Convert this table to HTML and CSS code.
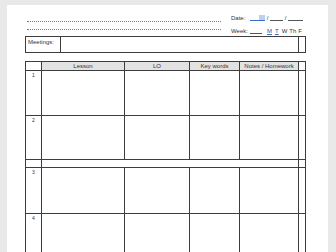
FILE: index.html
```html
<!DOCTYPE html>
<html>
<head>
<meta charset="utf-8">
<link rel="stylesheet" href="styles.css">
</head>
<body>
<div class="page">
  <div class="head">
    <div class="lines">
      <div class="dots"></div>
      <div class="dots second"></div>
    </div>
    <div class="meta">
      <div class="mrow">
        <span class="lbl">Date:</span>
        <span class="blank b15 hl"></span>
        <span class="sl">/</span>
        <span class="blank b13"></span>
        <span class="sl">/</span>
        <span class="blank b15"></span>
      </div>
      <div class="mrow">
        <span class="lbl">Week:</span>
        <span class="blank b12"></span>
        <span class="day link">M</span>
        <span class="day link">T</span>
        <span class="day">W</span>
        <span class="day">Th</span>
        <span class="day">F</span>
      </div>
    </div>
  </div>

  <div class="meet">
    <div class="cell mlabel">Meetings:</div>
    <div class="cell"></div>
    <div class="cell"></div>
  </div>

  <div class="plan">
    <div class="cell"></div>
    <div class="cell th">Lesson</div>
    <div class="cell th">LO</div>
    <div class="cell th">Key words</div>
    <div class="cell th">Notes / Homework</div>
    <div class="cell"></div>

    <div class="cell num">1</div>
    <div class="cell"></div><div class="cell"></div><div class="cell"></div><div class="cell"></div><div class="cell"></div>

    <div class="cell num">2</div>
    <div class="cell"></div><div class="cell"></div><div class="cell"></div><div class="cell"></div><div class="cell"></div>

    <div class="cell"></div>
    <div class="cell span4"></div>
    <div class="cell"></div>

    <div class="cell num">3</div>
    <div class="cell"></div><div class="cell"></div><div class="cell"></div><div class="cell"></div><div class="cell"></div>

    <div class="cell num">4</div>
    <div class="cell"></div><div class="cell"></div><div class="cell"></div><div class="cell"></div><div class="cell"></div>
  </div>
</div>
</body>
</html>
```

FILE: styles.css
```css
* { box-sizing: border-box; }
html, body { margin: 0; padding: 0; }
body {
  background: #e9e9e9;
  width: 336px;
  height: 252px;
  overflow: hidden;
  font-family: "Liberation Sans", Arial, sans-serif;
  font-size: 6px;
  color: #333;
}
.page {
  margin: 5px 0 0 7px;
  width: 321px;
  height: 247px;
  overflow: hidden;
  background: #fff;
  padding-left: 18px;
}
.head {
  display: flex;
  height: 31px;
}
.lines {
  margin-left: 2px;
  width: 194px;
  padding-top: 16px;
}
.dots {
  height: 0;
  border-top: 1px dotted #7a7a7a;
}
.dots.second { margin-top: 7px; }
.meta {
  margin-left: 10px;
  padding-top: 9px;
  display: flex;
  flex-direction: column;
  gap: 4px;
}
.mrow {
  display: flex;
  align-items: flex-end;
  height: 9px;
  line-height: 9px;
  white-space: nowrap;
}
.lbl { width: 19px; }
.blank {
  display: inline-block;
  height: 6px;
  border-bottom: 1px solid #555;
  margin-bottom: 2px;
}
.b15 { width: 15px; }
.b13 { width: 13px; }
.b12 { width: 12px; margin-right: 5px; }
.hl {
  background: linear-gradient(to right, transparent 60%, #bcd0f0 60%);
  border-bottom-color: #3c6fc4;
}
.sl { width: 5px; text-align: center; }
.day { margin-right: 2px; }
.link {
  color: #2f4f8f;
  text-decoration: underline;
  text-decoration-color: #3c6fc4;
  margin-right: 3px;
}
.meet {
  display: grid;
  grid-template-columns: 34px 237px 6px;
  grid-template-rows: 15px;
  gap: 1px;
  padding: 1px;
  width: 281px;
  background: #3d3d3d;
}
.cell { background: #fff; }
.mlabel {
  padding: 2px 0 0 2px;
  line-height: 7px;
}
.plan {
  margin-top: 8px;
  display: grid;
  grid-template-columns: 15px 82px 64px 49px 58px 6px;
  grid-template-rows: 8px 44px 43px 7px 45px 45px;
  gap: 1px;
  padding: 1px;
  width: 281px;
  background: #3d3d3d;
}
.th {
  background: #e2e2e2;
  text-align: center;
  line-height: 8px;
  white-space: nowrap;
}
.num {
  text-align: center;
  line-height: 7px;
  font-size: 5px;
  padding-top: 1px;
}
.span4 { grid-column: span 4; }
```
